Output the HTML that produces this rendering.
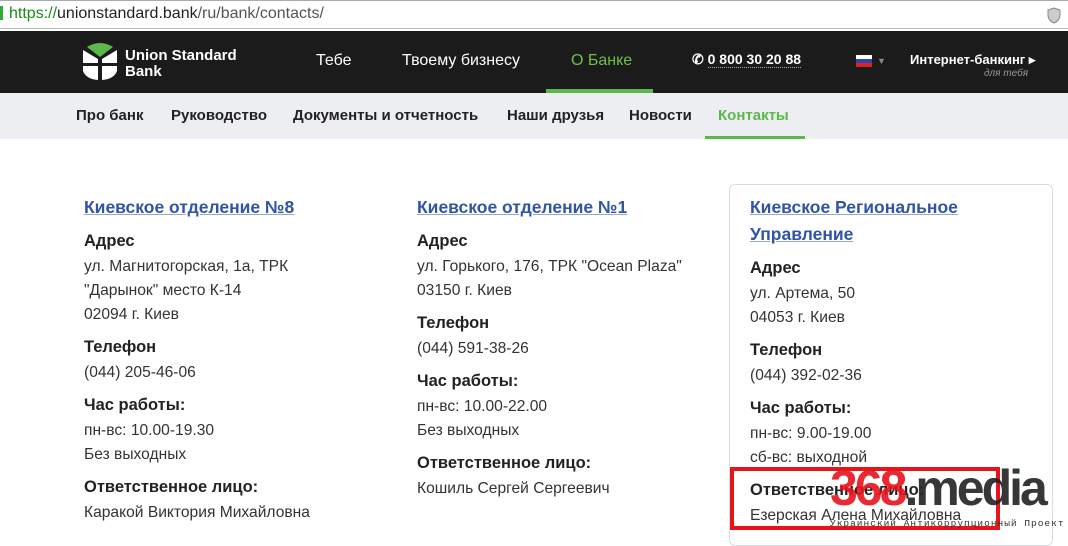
<!DOCTYPE html><html><head><meta charset="utf-8"><style>
body{margin:0;width:1068px;height:534px;overflow:hidden;background:#fff;font-family:"Liberation Sans",sans-serif;position:relative}
.a{position:absolute;white-space:nowrap}
.url{top:0;left:0;width:1068px;height:29px;border-bottom:1px solid #bbb;border-top:1px solid #aaa;box-sizing:border-box;background:#fff}
.hdr{top:31px;left:0;width:1068px;height:62px;background:#1b1b1b}
.sub{top:93px;left:0;width:1068px;height:46px;background:#eceef2}
.nv{color:#fff;font-size:16px}
.sn{font-size:15px;font-weight:bold;color:#222;top:107px}
h3{margin:0;font-size:17.5px;color:#2f55a4;font-weight:bold;text-decoration:underline;text-decoration-color:#9ab;line-height:27px}
.c b{display:block;font-size:16.5px;color:#222;margin-top:6px;line-height:28px}
.c div{font-size:15.6px;color:#333;line-height:24px}
.c{position:absolute;top:194px}
</style></head><body>
<div class="a url"><span class="a" style="left:0;top:5px;width:3px;height:14px;background:#3a3"></span><span class="a" style="left:9px;top:4px;font-size:16px;color:#555"><span style="color:#1a8a1a">https://</span><span style="color:#222">unionstandard.bank</span>/ru/bank/contacts/</span>
<svg class="a" style="left:1046px;top:6px" width="16" height="17"><path d="M8 1L2 3v5c0 4 3 7 6 8 3-1 6-4 6-8V3z" fill="#ccc" stroke="#888"/></svg></div>
<div class="a hdr"></div>
<svg class="a" style="left:82px;top:41px" width="36" height="40"><path d="M5 6Q18-2 31 6L18 16z" fill="#5cb84a"/><path d="M1 9L16 18V22H1z M35 9L20 18V22H35z M1 25H16V39Q4 38 1 30z M20 25H35V30Q32 38 20 39z" fill="#fff"/></svg>
<div class="a" style="left:125px;top:48px;color:#fff;font-weight:bold;font-size:15px;line-height:16px">Union Standard<br>Bank</div>
<div class="a nv" style="left:316px;top:52px">Тебе</div>
<div class="a nv" style="left:402px;top:52px">Твоему бизнесу</div>
<div class="a nv" style="left:571px;top:52px;color:#6cc04a">О Банке</div>
<div class="a" style="left:546px;top:89px;width:107px;height:4px;background:#5cb84a"></div>
<div class="a" style="left:692px;top:51px;color:#fff;font-weight:bold;font-size:14px">✆ <span style="border-bottom:1px dotted #aaa">0 800 30 20 88</span></div>
<div class="a" style="left:856px;top:55px;width:16px;height:12px;background:linear-gradient(#fff 33%,#2a46b0 33% 66%,#d22 66%)"></div>
<div class="a" style="left:877px;top:56px;color:#888;font-size:9px">▼</div>
<div class="a" style="left:910px;top:52px;color:#fff;font-weight:bold;font-size:13px">Интернет-банкинг ▸</div>
<div class="a" style="left:984px;top:68px;color:#999;font-size:10px;font-style:italic">для тебя</div>
<div class="a sub"></div>
<div class="a sn" style="left:76px">Про банк</div>
<div class="a sn" style="left:171px">Руководство</div>
<div class="a sn" style="left:293px">Документы и отчетность</div>
<div class="a sn" style="left:507px">Наши друзья</div>
<div class="a sn" style="left:629px">Новости</div>
<div class="a sn" style="left:718px;color:#5cb84a">Контакты</div>
<div class="a" style="left:705px;top:136px;width:100px;height:3px;background:#5cb84a"></div>
<div class="c" style="left:84px"><h3>Киевское отделение №8</h3><b>Адрес</b><div>ул. Магнитогорская, 1а, ТРК<br>"Дарынок" место К-14<br>02094 г. Киев</div><b>Телефон</b><div>(044) 205-46-06</div><b>Час работы:</b><div>пн-вс: 10.00-19.30<br>Без выходных</div><b>Ответственное лицо:</b><div>Каракой Виктория Михайловна</div></div>
<div class="c" style="left:417px"><h3>Киевское отделение №1</h3><b>Адрес</b><div>ул. Горького, 176, ТРК "Ocean Plaza"<br>03150 г. Киев</div><b>Телефон</b><div>(044) 591-38-26</div><b>Час работы:</b><div>пн-вс: 10.00-22.00<br>Без выходных</div><b>Ответственное лицо:</b><div>Кошиль Сергей Сергеевич</div></div>
<div class="a" style="left:729px;top:184px;width:322px;height:360px;border:1px solid #d8dde4;border-radius:6px"></div>
<div class="c" style="left:750px"><h3>Киевское Региональное<br>Управление</h3><b>Адрес</b><div>ул. Артема, 50<br>04053 г. Киев</div><b>Телефон</b><div>(044) 392-02-36</div><b>Час работы:</b><div>пн-вс: 9.00-19.00<br>сб-вс: выходной</div><b>Ответственное лицо:</b><div>Езерская Алена Михайловна</div></div>
<div class="a" style="left:730px;top:467px;width:270px;height:63px;border:4px solid #e8141c;box-sizing:border-box"></div>
<div class="a" style="left:830px;top:459px;font-size:50px;font-weight:bold;color:#e8141c;letter-spacing:-3px;opacity:.9">368<span style="color:#222">.media</span></div>
<div class="a" style="left:830px;top:518px;font-size:9.5px;color:#333;letter-spacing:1px;font-family:'Liberation Mono',monospace">Украинский Антикоррупционный Проект</div>
</body></html>
